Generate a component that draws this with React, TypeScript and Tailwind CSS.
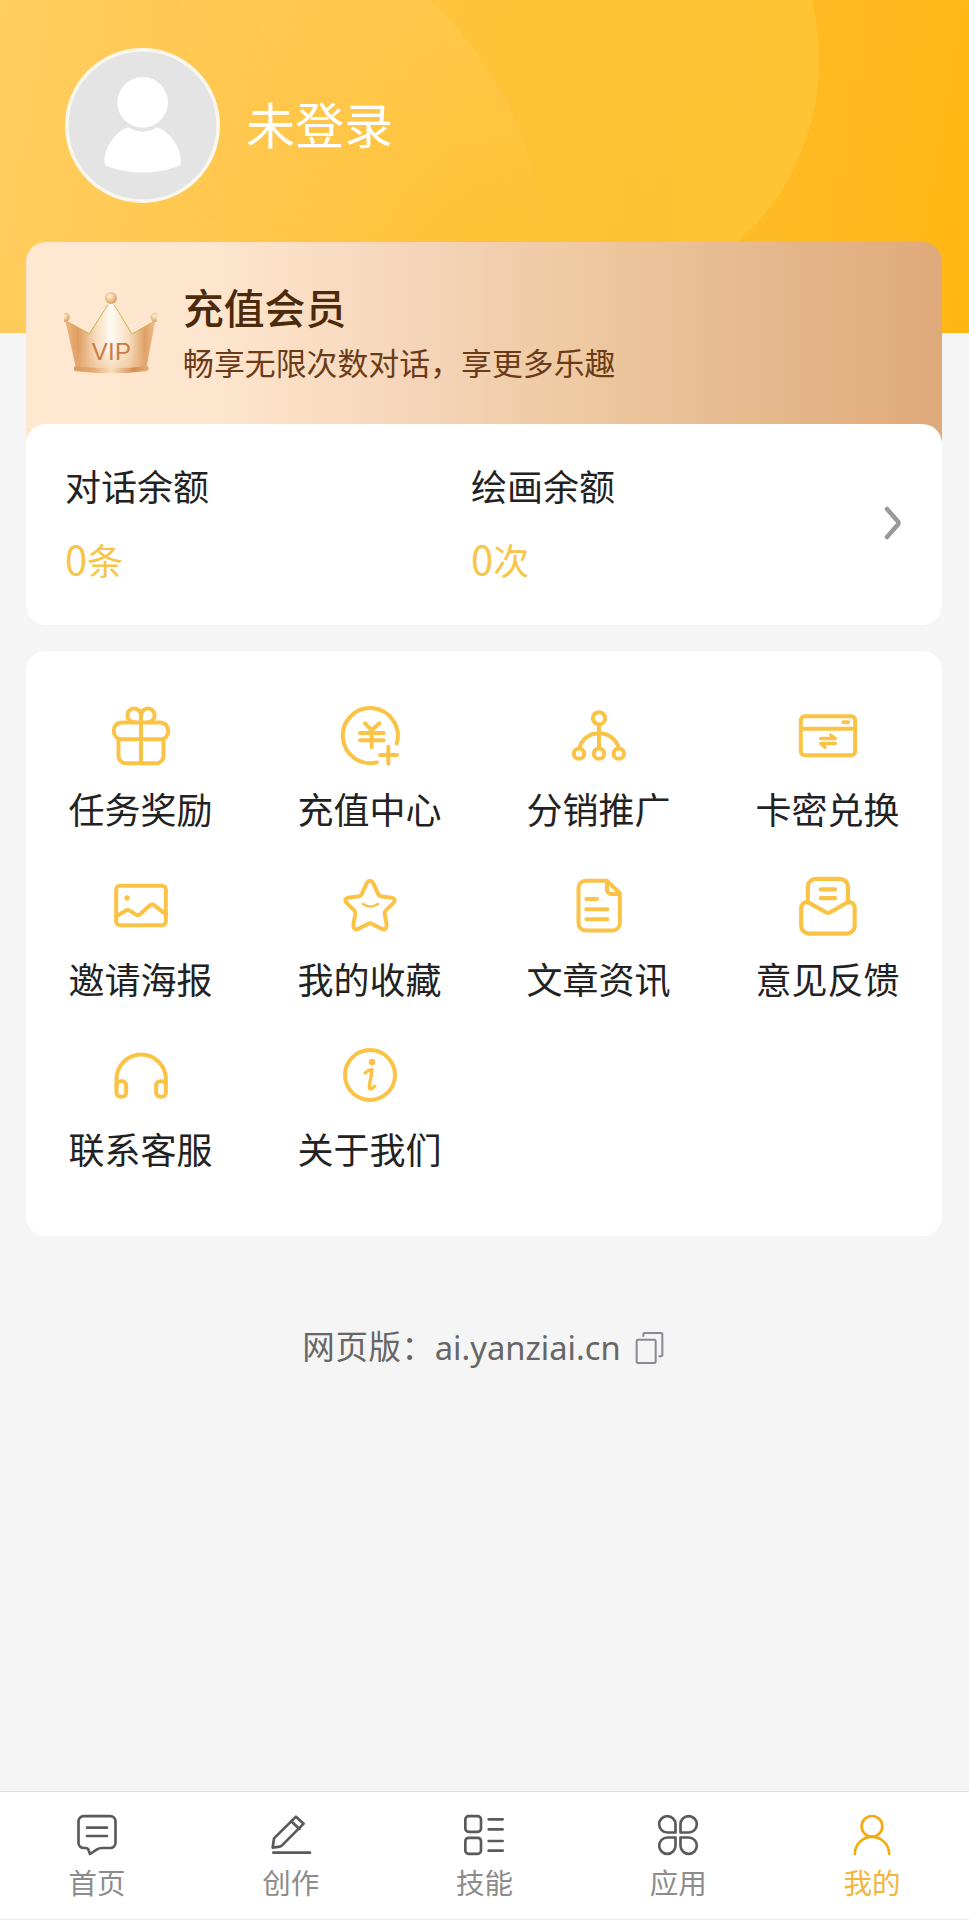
import type { ReactNode } from "react";

type Item = {
  label: string;
  icon: ReactNode;
};

const services: Item[] = [
  {
    label: "任务奖励",
    icon: (
      <>
        <rect x="14.5" y="55.5" width="163" height="50.5" rx="23" />
        <path d="M28.5 106V156a22 21.5 0 0 0 22 21.5H141.5a22 21.5 0 0 0 22-21.5V106" />
        <path d="M96 177V34a20.5 20.5 0 1 0-20.5 20.5" />
        <path d="M96 34a20.5 20.5 0 1 1 20.5 20.5" />
      </>
    ),
  },
  {
    label: "充值中心",
    icon: (
      <>
        <path d="M176 118A82.5 82.5 0 1 0 116.5 175" />
        <path d="M81 58L101 79L124 58M101 79V130M66 87H137M66 109H137" />
        <path d="M151 128V179M126 153H177" />
      </>
    ),
  },
  {
    label: "分销推广",
    icon: (
      <>
        <circle cx="96" cy="43" r="18.5" />
        <circle cx="36" cy="149" r="15.5" />
        <circle cx="96" cy="149" r="15.5" />
        <circle cx="155.5" cy="149" r="15.5" />
        <path d="M96 62V133M37 133C43 105 68 88 96 88S149 105 155 133" />
      </>
    ),
  },
  {
    label: "卡密兑换",
    icon: (
      <>
        <rect x="14.5" y="36.5" width="163" height="117" rx="12" />
        <path d="M15 74H177M142 55H156" />
        <path d="M74 103.5H118L104 93M118 118.5H74L87 130" strokeWidth="10" />
      </>
    ),
  },
  {
    label: "邀请海报",
    icon: (
      <>
        <rect x="21.5" y="35.5" width="149" height="118" rx="11" />
        <circle cx="54" cy="72" r="8" fill="currentColor" stroke="none" />
        <path d="M22 127L50 110Q56 106 62 110L81 122Q87 126 93 121L123 94Q129 88 136 94L171 121" />
      </>
    ),
  },
  {
    label: "我的收藏",
    icon: (
      <>
        <path d="M86 28Q96 13 106 28L121 61Q123 66 128 67L161 71Q176 75 167 86L143 110Q139 114 140 119L146 153Q146 170 132 165L101 149Q96 147 91 149L60 165Q46 170 46 153L52 119Q53 114 49 110L25 86Q16 75 31 71L64 67Q69 66 71 61Z" />
        <path d="M75 90Q97 105 120 90" strokeWidth="8" />
      </>
    ),
  },
  {
    label: "文章资讯",
    icon: (
      <>
        <path d="M120 20.5H56A21.5 21.5 0 0 0 34.5 42V148A21.5 21.5 0 0 0 56 169.5H137A21.5 21.5 0 0 0 158.5 148V57L120 20.5V48A12 12 0 0 0 132 60H158" />
        <path d="M58 75H90M58 106H121M58 136H121" />
      </>
    ),
  },
  {
    label: "意见反馈",
    icon: (
      <>
        <path d="M35.5 86V38.5a24 24 0 0 1 24-24H132a24 24 0 0 1 24 24V86" strokeWidth="12.5" />
        <path
          d="M35.5 84C24 83 15.5 91 15.5 103V155a24 24 0 0 0 24 24H152a24 24 0 0 0 24-24V103C176 91 168 83 156 84L106 113Q96 120 86 113Z"
          strokeWidth="12.5"
        />
        <path d="M74 46H117M74 72.5H117" strokeWidth="12.5" />
      </>
    ),
  },
  {
    label: "联系客服",
    icon: (
      <>
        <path d="M22.5 130V105.5a74 74 0 0 1 148 0V130" />
        <rect x="22.5" y="112" width="29" height="46" rx="12" />
        <rect x="141.5" y="112" width="29" height="46" rx="12" />
      </>
    ),
  },
  {
    label: "关于我们",
    icon: (
      <>
        <circle cx="96" cy="93" r="75" />
        <circle cx="102" cy="54" r="10" fill="currentColor" stroke="none" />
        <path d="M82 86Q92 76 102 77L94 127Q93 143 110 127" strokeWidth="10.5" />
      </>
    ),
  },
];

const tabs: Item[] = [
  {
    label: "首页",
    icon: (
      <>
        <path d="M32 15.5H112A15.5 15.5 0 0 1 127.5 31V95.5A15.5 15.5 0 0 1 112 111H86Q78 111 72 115L51 129L47 118Q45 111 38 111H32A15.5 15.5 0 0 1 16.5 95.5V31A15.5 15.5 0 0 1 32 15.5Z" />
        <path d="M42 50H102M42 75H102" />
      </>
    ),
  },
  {
    label: "创作",
    icon: (
      <>
        <path d="M17 110L21 82L87 17L110 38L45 103Q42 106 38 107Z" />
        <path d="M73 31L97 54M19 125H129" />
      </>
    ),
  },
  {
    label: "技能",
    icon: (
      <>
        <rect x="16" y="15.5" width="47" height="47" rx="10" />
        <rect x="16" y="80.5" width="47" height="48" rx="10" />
        <path d="M86 25H128M86 55H128M86 90H128M86 119H128" />
      </>
    ),
  },
  {
    label: "应用",
    icon: (
      <>
        <path d="M64.5 64.5V40a24.5 24.5 0 1 0-24.5 24.5Z" />
        <path d="M79.5 64.5V40a24.5 24.5 0 1 1 24.5 24.5Z" />
        <path d="M64.5 79.5V104a24.5 24.5 0 1 1-24.5-24.5Z" />
        <path d="M79.5 79.5V104a24.5 24.5 0 1 0 24.5-24.5Z" />
      </>
    ),
  },
  {
    label: "我的",
    icon: (
      <>
        <circle cx="72" cy="46" r="31" />
        <path d="M20.5 129a51.5 51.5 0 0 1 103 0" />
      </>
    ),
  },
];

const HeaderGlow = () => (
  <svg className="absolute inset-0 w-full h-full" viewBox="0 0 969 333" aria-hidden="true">
    <defs>
      <linearGradient id="glowLarge" x1="329" x2="819" y1="0" y2="0" gradientUnits="userSpaceOnUse">
        <stop offset="0.2" stopColor="#ffc63f" stopOpacity="0" />
        <stop offset="1" stopColor="#ffc435" />
      </linearGradient>
      <linearGradient id="glowSmall" x1="150" x2="547" y1="0" y2="0" gradientUnits="userSpaceOnUse">
        <stop offset="0" stopColor="#ffd068" stopOpacity="0" />
        <stop offset="1" stopColor="#ffcd5b" stopOpacity="0.5" />
      </linearGradient>
      <linearGradient id="glowFade" x1="0" x2="0" y1="0" y2="250" gradientUnits="userSpaceOnUse">
        <stop offset="0" stopColor="#fff" />
        <stop offset="1" stopColor="#000" />
      </linearGradient>
      <mask id="glowMask">
        <rect width="969" height="333" fill="url(#glowFade)" />
      </mask>
    </defs>
    <circle cx="574" cy="60" r="245" fill="url(#glowLarge)" />
    <circle cx="177" cy="270" r="370" fill="url(#glowSmall)" mask="url(#glowMask)" />
  </svg>
);

const Avatar = () => (
  <svg className="w-[155px] h-[155px]" viewBox="0 0 465 465" aria-hidden="true">
    <circle cx="232.5" cy="232.5" r="227" fill="#e4e4e4" stroke="#fbf7ec" strokeWidth="11" />
    <path d="M190 238C150 252 121 296 118 338Q117 349 126 354C190 380 276 380 340 354Q349 349 348 338C345 296 316 252 276 238Q233 264 190 238Z" fill="#fff" />
    <circle cx="233" cy="163" r="76" fill="#fff" />
  </svg>
);

const Crown = () => (
  <svg className="w-[116px] h-[104px]" viewBox="0 0 348 312" aria-hidden="true">
    <defs>
      <linearGradient id="crownBody" x1="35" x2="305" y1="0" y2="0" gradientUnits="userSpaceOnUse">
        <stop offset="0" stopColor="#edb680" />
        <stop offset="0.14" stopColor="#e09d62" />
        <stop offset="0.33" stopColor="#f6dcbd" />
        <stop offset="0.5" stopColor="#fffaf2" />
        <stop offset="0.7" stopColor="#f7dfc0" />
        <stop offset="0.88" stopColor="#dfa066" />
        <stop offset="1" stopColor="#eec394" />
      </linearGradient>
      <linearGradient id="crownShade" x1="0" x2="0" y1="60" y2="275" gradientUnits="userSpaceOnUse">
        <stop offset="0.65" stopColor="#e9b47c" stopOpacity="0" />
        <stop offset="1" stopColor="#e9b47c" stopOpacity="0.5" />
      </linearGradient>
      <linearGradient id="crownBase" x1="60" x2="285" y1="0" y2="0" gradientUnits="userSpaceOnUse">
        <stop offset="0" stopColor="#d99a5f" />
        <stop offset="0.25" stopColor="#e3a873" />
        <stop offset="0.5" stopColor="#f9dfbb" />
        <stop offset="0.8" stopColor="#d68c50" />
        <stop offset="1" stopColor="#e3b07d" />
      </linearGradient>
      <radialGradient id="crownBall" cx="0.4" cy="0.35" r="0.65">
        <stop offset="0" stopColor="#fff3da" />
        <stop offset="0.5" stopColor="#f0c898" />
        <stop offset="1" stopColor="#dda06a" />
      </radialGradient>
      <clipPath id="crownClip">
        <rect x="30" y="30" width="278" height="250" />
      </clipPath>
    </defs>
    <g clipPath="url(#crownClip)">
      <path d="M34 122L106 161L162 72H180L234 162L304 122L277 264Q170 280 66 264Z" fill="url(#crownBody)" />
      <path d="M34 122L106 161L162 72H180L234 162L304 122L277 264Q170 280 66 264Z" fill="url(#crownShade)" />
      <path d="M36 123L106 161L162 74M180 74L234 162L302 123" fill="none" stroke="#cdb052" strokeWidth="3" />
      <path d="M64 258Q170 272 281 258Q288 265 280 273Q170 287 62 273Q56 265 64 258Z" fill="url(#crownBase)" />
      <circle cx="171" cy="54" r="18" fill="url(#crownBall)" />
      <circle cx="33" cy="112" r="14" fill="url(#crownBall)" />
      <circle cx="304" cy="112" r="14" fill="url(#crownBall)" />
    </g>
    <text x="172" y="241" textAnchor="middle" fontFamily="Liberation Sans" fontSize="72" textLength="118" fill="#c97a45">
      VIP
    </text>
  </svg>
);

const CopyIcon = () => (
  <svg className="w-8 h-9" viewBox="0 0 96 108" fill="none" stroke="#8b8892" strokeWidth="6" strokeLinecap="round" aria-hidden="true">
    <rect x="11" y="29" width="57" height="70" rx="4" />
    <path d="M31 18V12Q31 9 34 9H85Q88 9 88 12V75Q88 79 84 79H79" />
  </svg>
);

const Balance = ({ label, amount, unit }: { label: string; amount: number; unit: string }) => (
  <div className="flex flex-col gap-[37px]">
    <span className="text-[36px] leading-9 text-[#222]">{label}</span>
    <span className="flex items-baseline text-[36px] leading-9 text-[#f9c549]">
      <span className="text-[40px]">{amount}</span>
      <span>{unit}</span>
    </span>
  </div>
);

const App = () => {
  return (
    <div className="w-[969px] h-[1920px] flex flex-col overflow-hidden bg-[#f5f5f5] font-['Noto_Sans_CJK_SC',sans-serif]">
      {/* Header */}
      <header className="relative shrink-0 h-[333px] bg-linear-100 from-[#ffcd60] via-[#ffc236] via-50% to-[#ffb610]">
        <HeaderGlow />
        <div className="relative flex items-center gap-[26px] pt-12 pl-[65px]">
          <Avatar />
          <h1 className="pb-[6px] text-[49px] leading-none text-white">未登录</h1>
        </div>
      </header>

      <main className="relative flex-grow -mt-[91px] pl-[26px] pr-[27px]">
        {/* Membership */}
        <section className="flex items-start h-[203px] rounded-t-[20px] pl-7 pt-[38px] bg-[linear-gradient(90deg,#ffe8d1_0%,#fee6ce_20%,#f4d4b8_44%,#efcba4_58%,#e6b78c_82%,#dfaa7a_100%)]">
          <Crown />
          <div className="flex flex-col pl-[13px] pt-[6px]">
            <h2 className="text-[40.8px] leading-[42px] font-medium text-[#4e2a0d]">充值会员</h2>
            <p className="mt-[18px] text-[30.9px] leading-8 text-[#6b3b18]">畅享无限次数对话，享更多乐趣</p>
          </div>
        </section>

        {/* Balance */}
        <section className="-mt-[21px] flex h-[201px] rounded-[20px] bg-white pl-[39px] pr-10 pt-[43px]">
          <div className="w-[406px]">
            <Balance label="对话余额" amount={0} unit="条" />
          </div>
          <Balance label="绘画余额" amount={0} unit="次" />
          <svg className="ml-auto mt-[39px] w-[18px] h-[34px]" viewBox="0 0 18 34" fill="none" stroke="#999" strokeWidth="4.5" strokeLinecap="round" strokeLinejoin="round">
            <path d="M3 3L14 15.5Q15 17 14 18.5L3 31" />
          </svg>
        </section>

        {/* Services */}
        <section className="mt-[26px] grid grid-cols-4 content-start gap-y-[47px] h-[585px] rounded-[20px] bg-white pt-[53px]">
          {services.map((item) => (
            <div key={item.label} className="flex flex-col items-center">
              <svg
                className="w-16 h-16 text-[#fbc346]"
                viewBox="0 0 192 192"
                fill="none"
                stroke="currentColor"
                strokeWidth="12"
                strokeLinecap="round"
                strokeLinejoin="round"
              >
                {item.icon}
              </svg>
              <span className="mt-[23px] mb-px text-[36px] leading-[35px] text-[#222]">{item.label}</span>
            </div>
          ))}
        </section>

        {/* Web version */}
        <div className="mt-[90px] flex items-center justify-center pr-px text-[32.5px] leading-9 text-[#666]">
          <span className="pb-[2px] tracking-[0.6px]">网页版：</span>
          <span className="pt-1 text-[32.7px] font-['Noto_Sans',sans-serif]">ai.yanziai.cn</span>
          <span className="ml-3 pt-1">
            <CopyIcon />
          </span>
        </div>
      </main>

      {/* Tab bar */}
      <nav className="shrink-0 h-[129px] grid grid-cols-5 border-t border-b border-t-[#dedede] border-b-[#ebebeb] bg-white">
        {tabs.map((tab) => (
          <div key={tab.label} className="group flex flex-col items-center pt-[19px] text-[#5a5a5a] last:text-[#f3ab0f]">
            <svg
              className="w-12 h-12"
              viewBox="0 0 144 144"
              fill="none"
              stroke="currentColor"
              strokeWidth="8"
              strokeLinecap="round"
              strokeLinejoin="round"
            >
              {tab.icon}
            </svg>
            <span className="mt-2 text-[28.5px] leading-[30px] text-[#8c8c8c] group-last:text-[#f3b53a]">{tab.label}</span>
          </div>
        ))}
      </nav>
    </div>
  );
};

export default App;
